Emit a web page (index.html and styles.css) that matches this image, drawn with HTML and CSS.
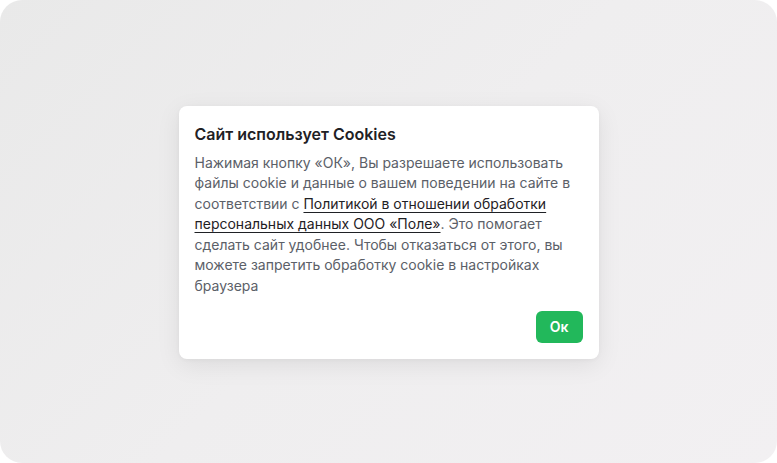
FILE: index.html
```html
<!DOCTYPE html>
<html lang="ru">
<head>
<meta charset="utf-8">
<title>Cookies</title>
<link rel="stylesheet" href="styles.css">
</head>
<body>
<div class="frame">
  <div class="modal">
    <h2 class="title">Сайт использует Cookies</h2>
    <p class="text">Нажимая кнопку «ОК», Вы разрешаете использовать файлы cookie и данные о вашем поведении на сайте в соответствии с <a class="link" href="#">Политикой в отношении обработки персональных данных ООО «Поле»</a>. Это помогает сделать сайт удобнее. Чтобы отказаться от этого, вы можете запретить обработку cookie в настройках браузера</p>
    <div class="actions"><button class="btn">Ок</button></div>
  </div>
</div>
</body>
</html>
```
FILE: styles.css
```css
* { box-sizing: border-box; }
html, body { margin: 0; padding: 0; background: #fff; }
body { font-family: Inter, "Noto Sans", sans-serif; }
.frame {
  width: 777px;
  height: 463px;
  border-radius: 22px;
  background: linear-gradient(135deg, #e9e9e9 0%, #efeeef 50%, #f2f0f2 100%);
  display: flex;
  align-items: center;
  justify-content: center;
}
.modal {
  width: 420px;
  background: #fff;
  border-radius: 8px;
  padding: 16px 16px 16px;
  box-shadow: 0 6px 24px rgba(0,0,0,0.08), 0 1px 4px rgba(0,0,0,0.04);
  margin-top: 2px;
}
.title {
  margin: 0;
  font-size: 16px;
  line-height: 24px;
  font-weight: 600;
  color: #1f2125;
}
.text {
  margin: 7px 0 0;
  font-size: 14px;
  line-height: 20.4px;
  color: #5b6068;
}
.link {
  color: #1f2125;
  text-decoration: underline;
  text-underline-offset: 3px;
  text-decoration-thickness: 1px;
}
.actions {
  display: flex;
  justify-content: flex-end;
  margin-top: 15px;
}
.btn {
  border: 0;
  background: #22b85b;
  color: #fff;
  font-family: inherit;
  font-weight: 600;
  font-size: 14px;
  height: 32px;
  width: 47px;
  border-radius: 6px;
  padding: 0;
}
```
